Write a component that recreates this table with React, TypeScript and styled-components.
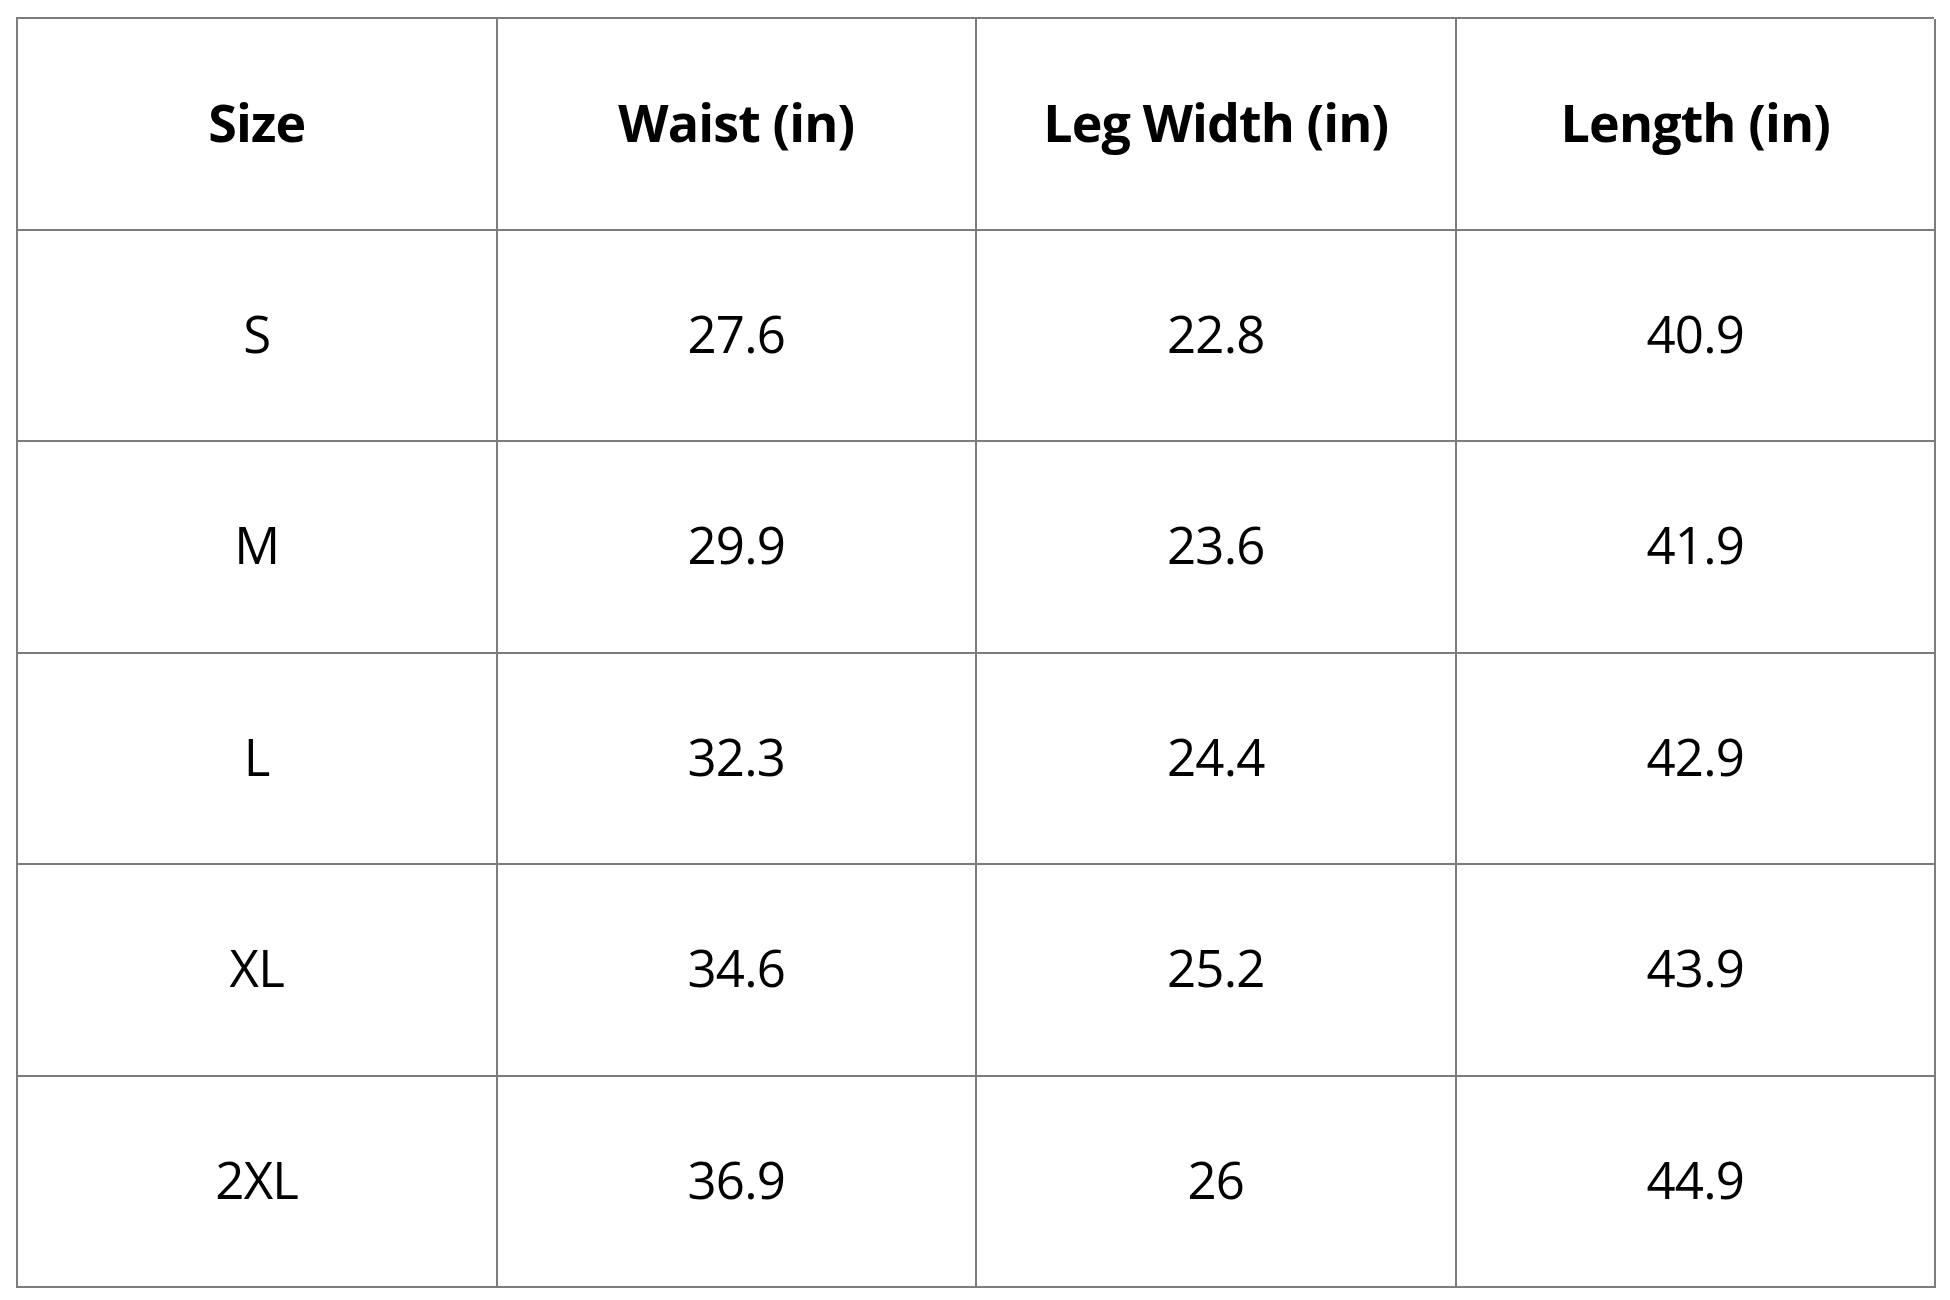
import React from 'react';
import styled, { createGlobalStyle } from 'styled-components';

const GlobalStyle = createGlobalStyle`
  html, body {
    margin: 0;
    padding: 0;
    background: #ffffff;
  }
`;

const Page = styled.div`
  width: 1950px;
  height: 1300px;
  box-sizing: border-box;
  padding: 17px 0 0 16px;
  background: #ffffff;
`;

const Table = styled.div`
  display: grid;
  grid-template-columns: repeat(4, 479.5px);
  grid-auto-rows: 211.5px;
  width: 1918px;
  border-top: 2px solid #7c7c7c;
  border-left: 2px solid #7c7c7c;
  box-sizing: border-box;
`;

const Cell = styled.div<{ $head?: boolean }>`
  display: flex;
  align-items: center;
  justify-content: center;
  padding-bottom: 5px;
  border-right: 2px solid #7c7c7c;
  border-bottom: 2px solid #7c7c7c;
  font-family: 'Open Sans', 'Liberation Sans', sans-serif;
  font-size: ${(p) => (p.$head ? '52px' : '51px')};
  font-weight: ${(p) => (p.$head ? 700 : 400)};
  letter-spacing: ${(p) => (p.$head ? '-0.9px' : '-0.8px')};
  color: #000000;
`;

const headers = ['Size', 'Waist (in)', 'Leg Width (in)', 'Length (in)'];

const rows = [
  ['S', '27.6', '22.8', '40.9'],
  ['M', '29.9', '23.6', '41.9'],
  ['L', '32.3', '24.4', '42.9'],
  ['XL', '34.6', '25.2', '43.9'],
  ['2XL', '36.9', '26', '44.9'],
];

export default function App() {
  return (
    <Page>
      <GlobalStyle />
      <Table>
        {headers.map((h) => (
          <Cell key={h} $head>
            {h}
          </Cell>
        ))}
        {rows.map((r) =>
          r.map((v, i) => <Cell key={r[0] + i}>{v}</Cell>)
        )}
      </Table>
    </Page>
  );
}
